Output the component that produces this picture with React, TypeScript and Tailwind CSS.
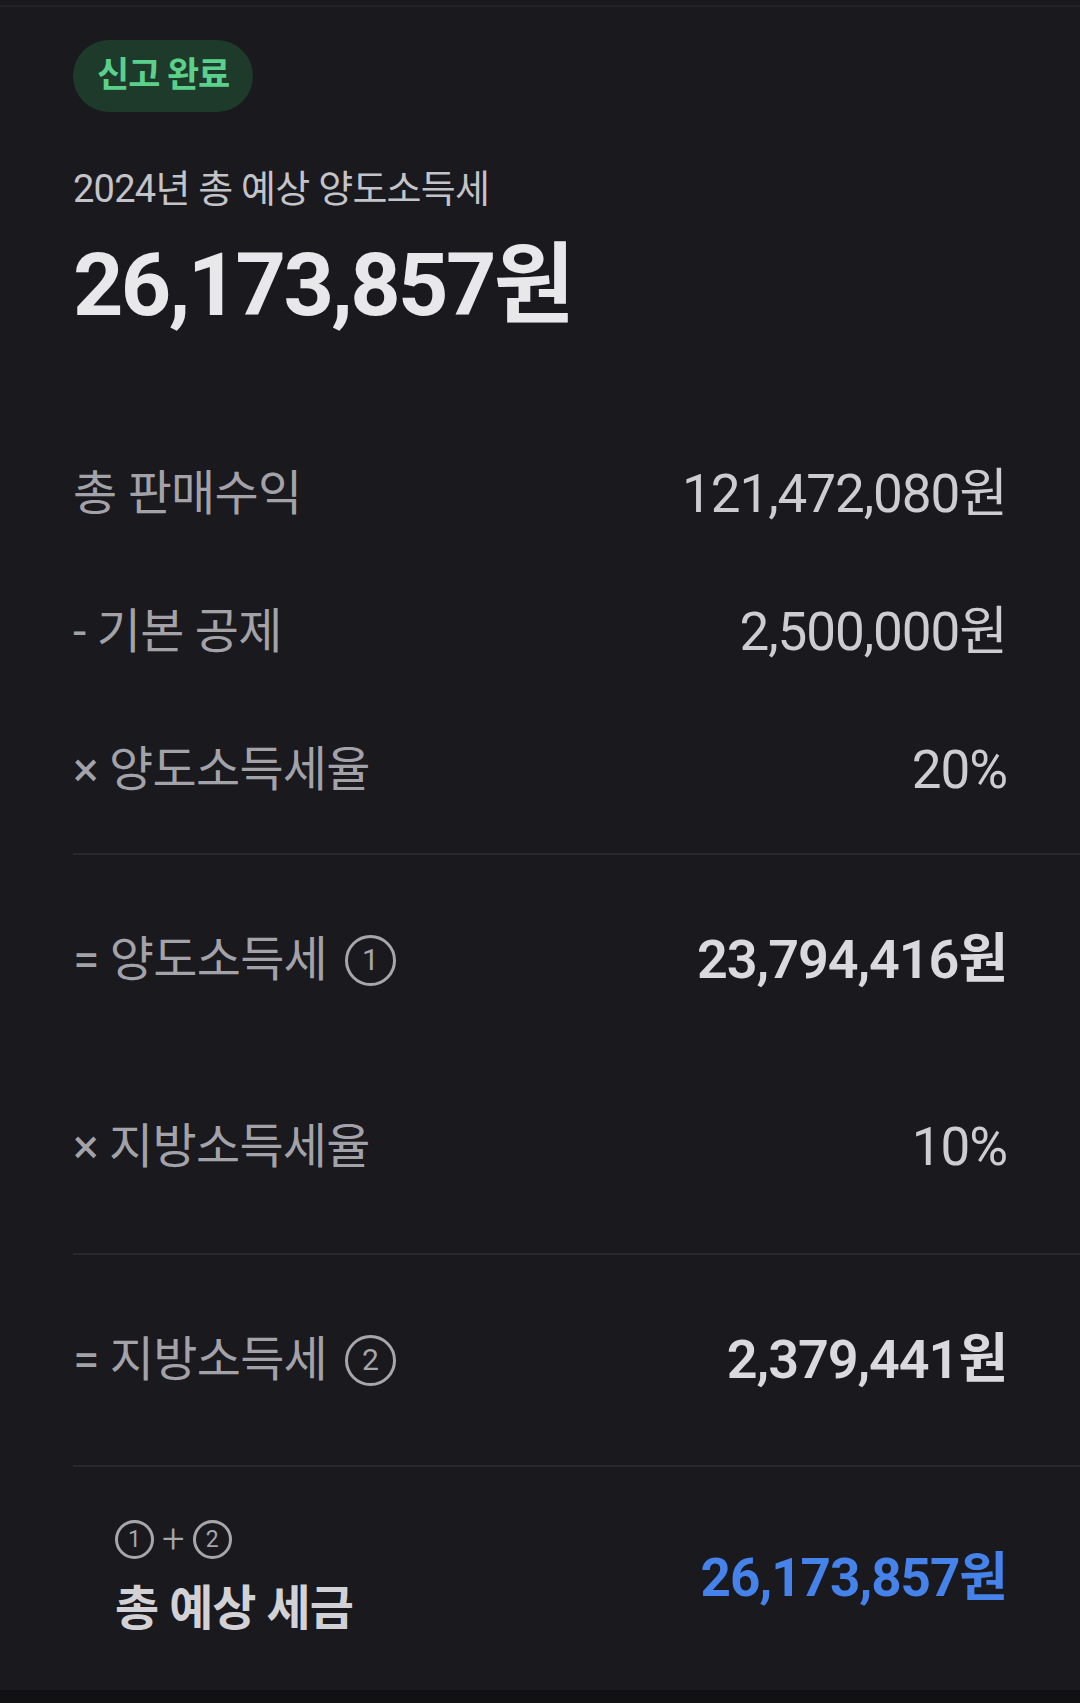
import React from 'react';

type Row = { label: string; value: string; mark?: number; strong?: boolean };

const top: Row[] = [
  { label: '총 판매수익', value: '121,472,080원' },
  { label: '- 기본 공제', value: '2,500,000원' },
  { label: '× 양도소득세율', value: '20%' },
];

function Circled({ n, small }: { n: number; small?: boolean }) {
  if (small) {
    return (
      <span className="flex h-[39px] w-[39px] items-center justify-center rounded-full border-[3px] border-[#a6a6ab] text-[23px] leading-none text-[#a6a6ab]">
        {n}
      </span>
    );
  }
  return (
    <span className="flex h-[51px] w-[51px] items-center justify-center rounded-full border-[3.5px] border-[#a6a6ab] text-[30px] leading-none tracking-normal text-[#a6a6ab]">
      {n}
    </span>
  );
}

function Line({ row, className = '' }: { row: Row; className?: string }) {
  return (
    <div className={`flex items-center justify-between pr-[73px] ${className}`}>
      <span className="flex items-center gap-[18px] text-[48px] leading-[56px] tracking-[-0.015em] text-[#a2a2a8]">
        {row.label}
        {row.mark && <Circled n={row.mark} />}
      </span>
      <span
        className={
          row.strong
            ? 'text-[54px] font-semibold leading-[60px] tracking-[-0.02em] text-[#dadade]'
            : 'text-[53px] leading-[60px] tracking-[-0.02em] text-[#cdcdd1]'
        }
      >
        {row.value}
      </span>
    </div>
  );
}

export default function App() {
  return (
    <div className="min-h-screen bg-[#111113] font-['Roboto','Noto_Sans_CJK_KR',sans-serif]">
      <div className="bg-[#19191e] pt-[5px]">
        <div className="h-[2px] bg-[#232328]" />

        <div className="pl-[73px]">
          {/* Header */}
          <div className="flex pt-[33px]">
            <span className="flex h-[72px] items-center rounded-full bg-[#1e3a2b] px-[24px] text-[35px] font-bold tracking-[-0.03em] text-[#5bd08b]">
              신고 완료
            </span>
          </div>
          <p className="mt-[55px] text-[38px] leading-[44px] tracking-[-0.02em] text-[#c4c4c8]">
            2024년 총 예상 양도소득세
          </p>
          <p className="mt-[26px] text-[88px] font-bold leading-[96px] tracking-[-0.03em] text-[#e8e8ea]">
            26,173,857원
          </p>

          {/* Breakdown */}
          <div className="mt-[92px] pb-[14px]">
            {top.map((r) => (
              <Line key={r.label} row={r} className="h-[138px]" />
            ))}
          </div>
          <div className="h-[2px] bg-[#28282d]" />

          <div className="pt-[51px] pb-[52px]">
            <Line row={{ label: '= 양도소득세', value: '23,794,416원', mark: 1, strong: true }} className="h-[108px]" />
            <Line row={{ label: '× 지방소득세율', value: '10%' }} className="mt-[79px] h-[108px]" />
          </div>
          <div className="h-[2px] bg-[#28282d]" />

          <div className="pt-[51px] pb-[51px]">
            <Line row={{ label: '= 지방소득세', value: '2,379,441원', mark: 2, strong: true }} className="h-[108px]" />
          </div>
          <div className="h-[2px] bg-[#28282d]" />

          {/* Total */}
          <div className="flex items-center justify-between pt-[53px] pb-[55px] pr-[73px]">
            <div className="ml-[42px] flex flex-col">
              <div className="flex h-[39px] items-center gap-[8px]">
                <Circled n={1} small />
                <span className="text-[40px] font-light leading-none text-[#a6a6ab]">+</span>
                <Circled n={2} small />
              </div>
              <p className="mt-[24px] text-[48px] font-bold leading-[52px] tracking-[-0.02em] text-[#d2d2d6]">
                총 예상 세금
              </p>
            </div>
            <span className="text-[53px] font-bold leading-[60px] tracking-[-0.02em] text-[#4582ea]">
              26,173,857원
            </span>
          </div>
        </div>
      </div>
    </div>
  );
}
